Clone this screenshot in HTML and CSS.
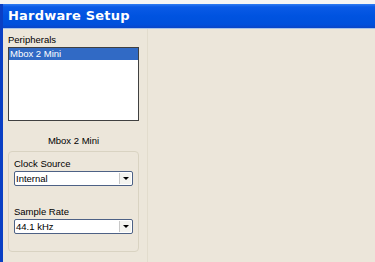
FILE: index.html
```html
<!DOCTYPE html>
<html lang="en">
<head>
    <meta charset="UTF-8">
    <title>Hardware Setup</title>
    <link rel="stylesheet" href="styles.css">
</head>
<body>

    <div class="window">
        <div class="titlebar">Hardware Setup</div>
        <div class="content">
            <div class="left-pane">
                <div class="label">Peripherals</div>
                <div class="listbox">
                    <div class="list-item selected">Mbox 2 Mini</div>
                </div>
                <div class="device-name">Mbox 2 Mini</div>

                <div class="groupbox">
                    <div class="label">Clock Source</div>
                    <div class="combo">
                        <span class="combo-text">Internal</span>
                        <span class="combo-btn"><span class="arrow"></span></span>
                    </div>

                    <div class="label rate-label">Sample Rate</div>
                    <div class="combo">
                        <span class="combo-text">44.1 kHz</span>
                        <span class="combo-btn"><span class="arrow"></span></span>
                    </div>
                </div>
            </div>
            <div class="right-pane"></div>
        </div>
    </div>

</body>
</html>
```

FILE: styles.css
```css
body {
    margin: 0;
    padding: 0;
    background: #f4f4f4;
    font-family: "Liberation Sans", Arial, sans-serif;
    font-size: 9.5px;
    color: #000;
    overflow: hidden;
}

.window {
    margin-top: 4px;
    height: 258px;
    border-left: 3px solid #0a3fc4;
    background: #ece6da;
    display: flex;
    flex-direction: column;
}

.titlebar {
    height: 24px;
    line-height: 24px;
    padding-left: 5px;
    background: linear-gradient(#2f7cf2 0%, #0a5ae6 12%, #0053e0 50%, #0050dc 85%, #0a45c8 100%);
    color: white;
    font-family: "DejaVu Sans", sans-serif;
    font-weight: bold;
    font-size: 13px;
    letter-spacing: 0.2px;
    border-bottom: 1px solid #a9c3e8;
}

.content {
    flex: 1;
    display: flex;
}

.left-pane {
    width: 139px;
    padding: 5px 0 0 5px;
    border-right: 1px solid #e2dccd;
    margin-right: 8px;
}

.label {
    height: 12px;
    line-height: 12px;
}

.listbox {
    width: 129px;
    height: 72px;
    margin-top: 1px;
    border: 1px solid #404040;
    background: white;
}

.list-item {
    height: 12px;
    line-height: 12px;
    padding-left: 1px;
}

.selected {
    background: #316ac5;
    color: white;
}

.device-name {
    width: 131px;
    text-align: center;
    margin-top: 14px;
    height: 12px;
    line-height: 12px;
}

.groupbox {
    width: 124px;
    height: 93px;
    margin-top: 4px;
    border: 1px solid #d9d3c2;
    border-radius: 4px;
    padding: 6px 0 0 5px;
}

.rate-label {
    margin-top: 20px;
}

.combo {
    width: 117px;
    height: 13px;
    margin-top: 1px;
    border: 1px solid #4d6185;
    border-radius: 2px;
    background: white;
    display: flex;
    align-items: center;
}

.combo-text {
    flex: 1;
    padding-left: 1px;
}

.combo-btn {
    width: 11px;
    height: 11px;
    margin-right: 1px;
    border-left: 1px solid #c8c8c8;
    background: #f4f4f0;
    display: flex;
    justify-content: center;
    align-items: center;
}

.arrow {
    width: 0;
    height: 0;
    border-left: 3px solid transparent;
    border-right: 3px solid transparent;
    border-top: 3px solid #000;
}

.right-pane {
    flex: 1;
}
```
